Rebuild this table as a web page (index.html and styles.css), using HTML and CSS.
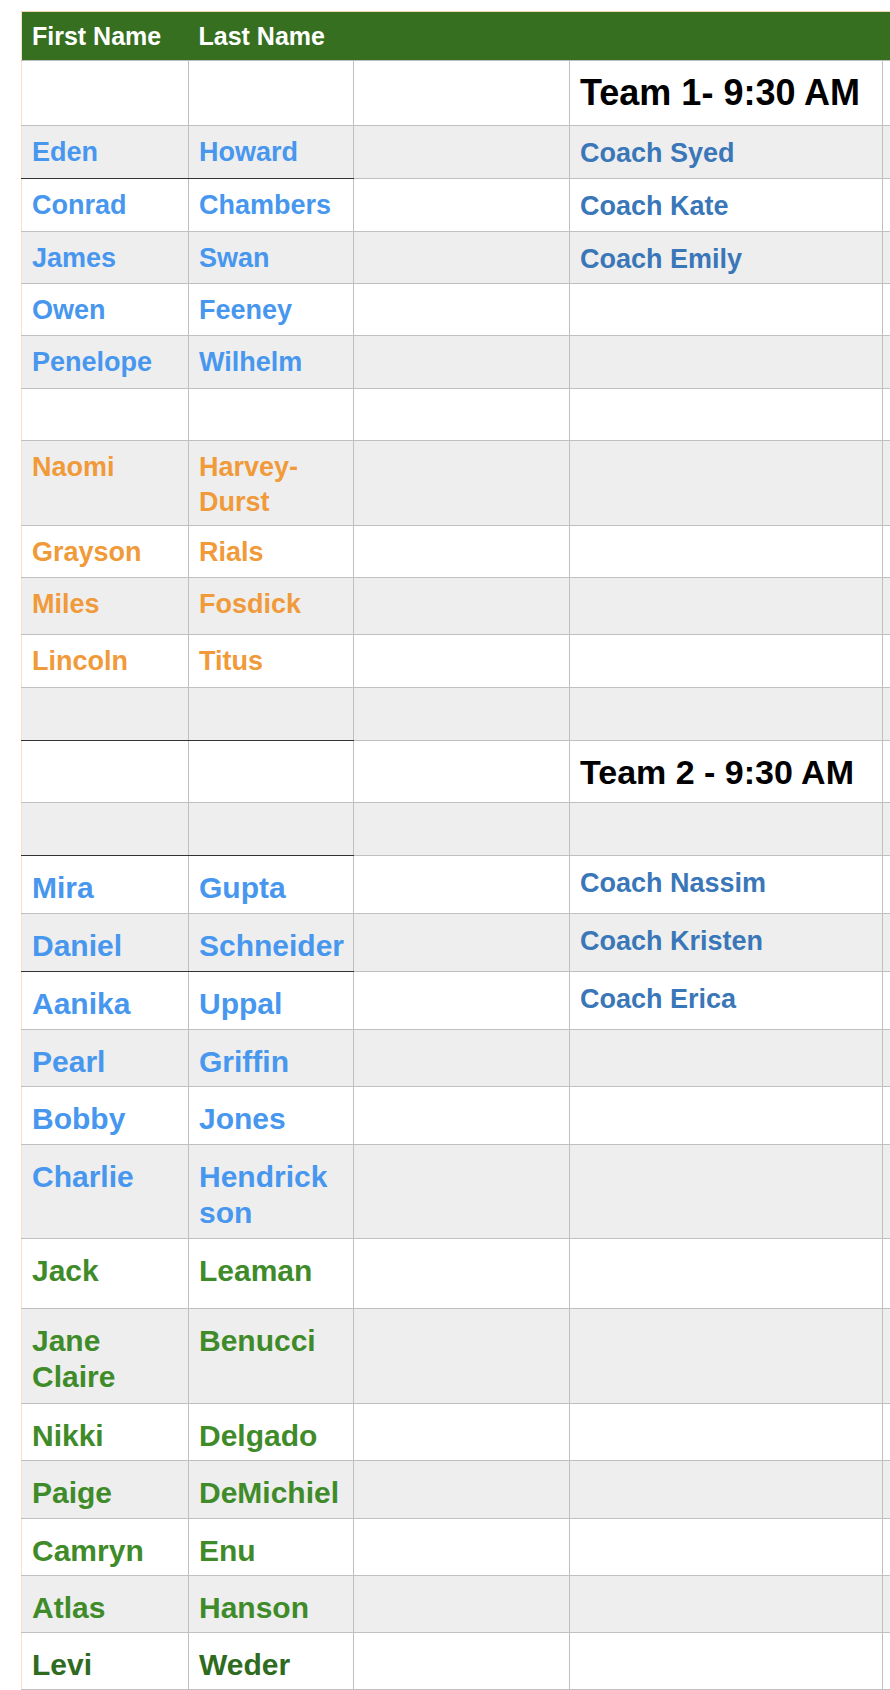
FILE: index.html
```html
<!DOCTYPE html>
<html>
<head>
<meta charset="utf-8">
<title>Teams</title>
<link rel="stylesheet" href="styles.css">
</head>
<body>
<div class="sheet">
<table class="grid">
<colgroup>
<col class="c1"><col class="c2"><col class="c3"><col class="c4"><col class="c5">
</colgroup>
<thead>
<tr class="head"><th>First Name</th><th>Last Name</th><th></th><th></th><th></th></tr>
</thead>
<tbody class="top">
<tr class="h65"><td></td><td></td><td></td><td class="team t1">Team 1- 9:30 AM</td><td></td></tr>
<tr class="h53 blue"><td class="dk">Eden</td><td class="dk">Howard</td><td></td><td class="coach">Coach Syed</td><td></td></tr>
<tr class="h53 blue"><td>Conrad</td><td>Chambers</td><td></td><td class="coach">Coach Kate</td><td></td></tr>
<tr class="h52 blue"><td>James</td><td>Swan</td><td></td><td class="coach">Coach Emily</td><td></td></tr>
<tr class="h52 blue"><td>Owen</td><td>Feeney</td><td></td><td></td><td></td></tr>
<tr class="h53 blue"><td>Penelope</td><td>Wilhelm</td><td></td><td></td><td></td></tr>
<tr class="h52"><td></td><td></td><td></td><td></td><td></td></tr>
<tr class="h85 orange"><td>Naomi</td><td>Harvey-Durst</td><td></td><td></td><td></td></tr>
<tr class="h52 orange"><td>Grayson</td><td>Rials</td><td></td><td></td><td></td></tr>
<tr class="h57 orange"><td>Miles</td><td>Fosdick</td><td></td><td></td><td></td></tr>
<tr class="h53 orange"><td>Lincoln</td><td>Titus</td><td></td><td></td><td></td></tr>
<tr class="h53"><td class="dk"></td><td class="dk"></td><td></td><td></td><td></td></tr>
<tr class="h62"><td></td><td></td><td></td><td class="team t2">Team 2 - 9:30 AM</td><td></td></tr>
<tr class="h53"><td class="dk"></td><td class="dk"></td><td></td><td></td><td></td></tr>
<tr class="h58 blue big"><td>Mira</td><td>Gupta</td><td></td><td class="coach">Coach Nassim</td><td></td></tr>
<tr class="h58 blue big"><td class="dk">Daniel</td><td class="dk">Schneider</td><td></td><td class="coach">Coach Kristen</td><td></td></tr>
<tr class="h58 blue big"><td>Aanika</td><td>Uppal</td><td></td><td class="coach">Coach Erica</td><td></td></tr>
<tr class="h57 blue big"><td>Pearl</td><td>Griffin</td><td></td><td></td><td></td></tr>
<tr class="h58 blue big"><td>Bobby</td><td>Jones</td><td></td><td></td><td></td></tr>
<tr class="h94 blue big"><td>Charlie</td><td>Hendrick son</td><td></td><td></td><td></td></tr>
<tr class="h70 green big"><td>Jack</td><td>Leaman</td><td></td><td></td><td></td></tr>
<tr class="h95 green big"><td>Jane Claire</td><td>Benucci</td><td></td><td></td><td></td></tr>
<tr class="h57 green big"><td>Nikki</td><td>Delgado</td><td></td><td></td><td></td></tr>
<tr class="h58 green big"><td>Paige</td><td>DeMichiel</td><td></td><td></td><td></td></tr>
<tr class="h57 green big"><td>Camryn</td><td>Enu</td><td></td><td></td><td></td></tr>
<tr class="h57 green big"><td>Atlas</td><td>Hanson</td><td></td><td></td><td></td></tr>
<tr class="h57 darkgreen big"><td>Levi</td><td>Weder</td><td></td><td></td><td></td></tr>
</tbody>
</table>
</div>
</body>
</html>
```
FILE: styles.css
```css
html, body {
  margin: 0;
  padding: 0;
  background: #ffffff;
}
body {
  font-family: "Liberation Sans", Arial, Helvetica, sans-serif;
  overflow: hidden;
}
.sheet {
  padding: 11px 0 0 21px;
  width: 869px;
  overflow: hidden;
}
.grid {
  border-collapse: collapse;
  table-layout: fixed;
  width: 981px;
  border-left: 1px solid #f8e1c6;
}
.c1 { width: 167px; }
.c2 { width: 165px; }
.c3 { width: 216px; }
.c4 { width: 313px; }
.c5 { width: 120px; }

.head th {
  height: 49px;
  background: #356f1f;
  color: #ffffff;
  font-size: 25px;
  font-weight: bold;
  text-align: left;
  padding: 0 0 0 10px;
  vertical-align: middle;
  border-top: 1px solid #f3d5b0;
  border-bottom: 1px solid #bdbdbd;
  box-sizing: border-box;
  white-space: nowrap;
}
td {
  border: 1px solid #c0c0c0;
  padding: 9px 0 0 10px;
  vertical-align: top;
  font-size: 27px;
  line-height: 35px;
  font-weight: bold;
  box-sizing: border-box;
}
td:first-child { border-left-color: #f8e1c6; }
tbody tr:nth-child(even) td { background: #eeeeee; }
tbody tr:nth-child(odd) td { background: #ffffff; }

td.dk { border-bottom: 1px solid #333333; }

.blue td { color: #4797ef; }
.orange td { color: #f09a3a; }
.green td { color: #3f8b2a; }
.darkgreen td { color: #2f6b1f; }

.big td {
  font-size: 30px;
  line-height: 36px;
  padding-top: 14px;
}
tr td.coach {
  color: #3a77b8;
  font-size: 27px;
  line-height: 35px;
  padding-top: 10px;
  white-space: nowrap;
}
td.team {
  color: #000000;
  vertical-align: middle;
  padding-top: 0;
  white-space: nowrap;
}
td.t1 { font-size: 36px; line-height: 40px; }
td.t2 { font-size: 34px; line-height: 40px; }

.h52 td { height: 52px; }
.h53 td { height: 53px; }
.h57 td { height: 57px; }
.h58 td { height: 58px; }
.h62 td { height: 62px; }
.h65 td { height: 65px; }
.h70 td { height: 70px; }
.h85 td { height: 85px; }
.h94 td { height: 94px; }
.h95 td { height: 95px; }
```
